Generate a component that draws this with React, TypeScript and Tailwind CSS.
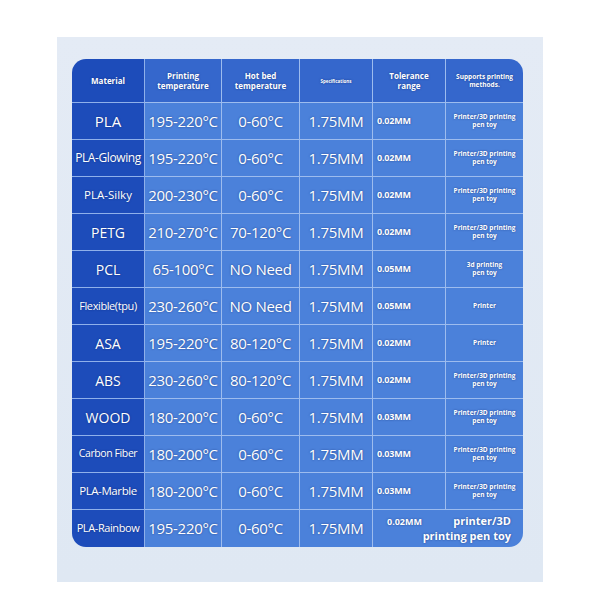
import React from 'react';

type Row = {
  name: string;
  nameSize: string;
  print: string;
  bed: string;
  tol: string;
  use: string[];
};

const pen = ['Printer/3D printing', 'pen toy'];

const rows: Row[] = [
  { name: 'PLA', nameSize: 'text-[15px]', print: '195-220°C', bed: '0-60°C', tol: '0.02MM', use: pen },
  { name: 'PLA-Glowing', nameSize: 'text-[12px] tracking-[-0.4px]', print: '195-220°C', bed: '0-60°C', tol: '0.02MM', use: pen },
  { name: 'PLA-Silky', nameSize: 'text-[11.5px]', print: '200-230°C', bed: '0-60°C', tol: '0.02MM', use: pen },
  { name: 'PETG', nameSize: 'text-[14px]', print: '210-270°C', bed: '70-120°C', tol: '0.02MM', use: pen },
  { name: 'PCL', nameSize: 'text-[14px]', print: '65-100°C', bed: 'NO Need', tol: '0.05MM', use: ['3d printing', 'pen toy'] },
  { name: 'Flexible(tpu)', nameSize: 'text-[11px] tracking-[-0.4px]', print: '230-260°C', bed: 'NO Need', tol: '0.05MM', use: ['Printer'] },
  { name: 'ASA', nameSize: 'text-[14px]', print: '195-220°C', bed: '80-120°C', tol: '0.02MM', use: ['Printer'] },
  { name: 'ABS', nameSize: 'text-[14px]', print: '230-260°C', bed: '80-120°C', tol: '0.02MM', use: pen },
  { name: 'WOOD', nameSize: 'text-[14px]', print: '180-200°C', bed: '0-60°C', tol: '0.03MM', use: pen },
  { name: 'Carbon Fiber', nameSize: 'text-[10.5px] tracking-[-0.4px]', print: '180-200°C', bed: '0-60°C', tol: '0.03MM', use: pen },
  { name: 'PLA-Marble', nameSize: 'text-[11.5px] tracking-[-0.4px]', print: '180-200°C', bed: '0-60°C', tol: '0.03MM', use: pen },
];

const cell = 'flex items-center justify-center border-r border-b border-[#9dbcee] bg-[#4b81da]';
const dark = 'flex items-center justify-center border-r border-b border-[#8fb0ea] bg-[#1d4cba] font-medium';
const head = 'flex items-center justify-center text-center border-r border-b border-[#9dbcee] bg-[#3567cc] text-[8px] font-bold leading-[10px]';
const big = 'text-[15px] tracking-[-0.3px]';

export default function App() {
  return (
    <div className="w-[600px] h-[600px] bg-white pt-[37px] font-['Open_Sans',sans-serif] text-white [text-shadow:0_0_2px_rgba(10,30,90,0.6)]">
      <div className="mx-auto w-[486px] h-[545px] bg-gradient-to-b from-[#e4ebf5] to-[#dfe8f3] pt-[22px] pl-[15px]">
        <div className="w-[451px] rounded-[14px] overflow-hidden grid grid-cols-[73px_77px_78px_73px_73px_77px] grid-rows-[44px_repeat(12,37px)]">
          <div className={dark + ' text-[8px] !font-bold'}>Material</div>
          <div className={head}>Printing<br />temperature</div>
          <div className={head}>Hot bed<br />temperature</div>
          <div className={head + ' !text-[4.5px]'}>Specifications</div>
          <div className={head}>Tolerance<br />range</div>
          <div className={head + ' !text-[6.5px] !leading-[8px] border-r-0'}>Supports printing<br />methods.</div>

          {rows.map((r) => (
            <React.Fragment key={r.name}>
              <div className={dark + ' ' + r.nameSize + ' whitespace-nowrap'}>{r.name}</div>
              <div className={cell + ' ' + big}>{r.print}</div>
              <div className={cell + ' ' + big}>{r.bed}</div>
              <div className={cell + ' ' + big}>1.75MM</div>
              <div className={cell + ' !justify-start pl-[4px] text-[9px] font-bold tracking-[-0.2px]'}>{r.tol}</div>
              <div className={cell + ' border-r-0 flex-col text-center text-[6.5px] font-bold leading-[8px]'}>
                {r.use.map((l) => (
                  <span key={l}>{l}</span>
                ))}
              </div>
            </React.Fragment>
          ))}

          <div className={dark + ' text-[11px] tracking-[-0.4px] whitespace-nowrap border-b-0'}>PLA-Rainbow</div>
          <div className={cell + ' border-b-0 ' + big}>195-220°C</div>
          <div className={cell + ' border-b-0 ' + big}>0-60°C</div>
          <div className={cell + ' border-b-0 ' + big}>1.75MM</div>
          <div className="col-span-2 bg-[#4b81da] flex flex-col items-end justify-center pr-[12px] text-[11px] font-bold leading-[14px]">
            <div className="w-full flex justify-between pl-[14px]">
              <span className="text-[9px] pt-[1px]">0.02MM</span>
              <span>printer/3D</span>
            </div>
            <div>printing pen toy</div>
          </div>
        </div>
      </div>
    </div>
  );
}
